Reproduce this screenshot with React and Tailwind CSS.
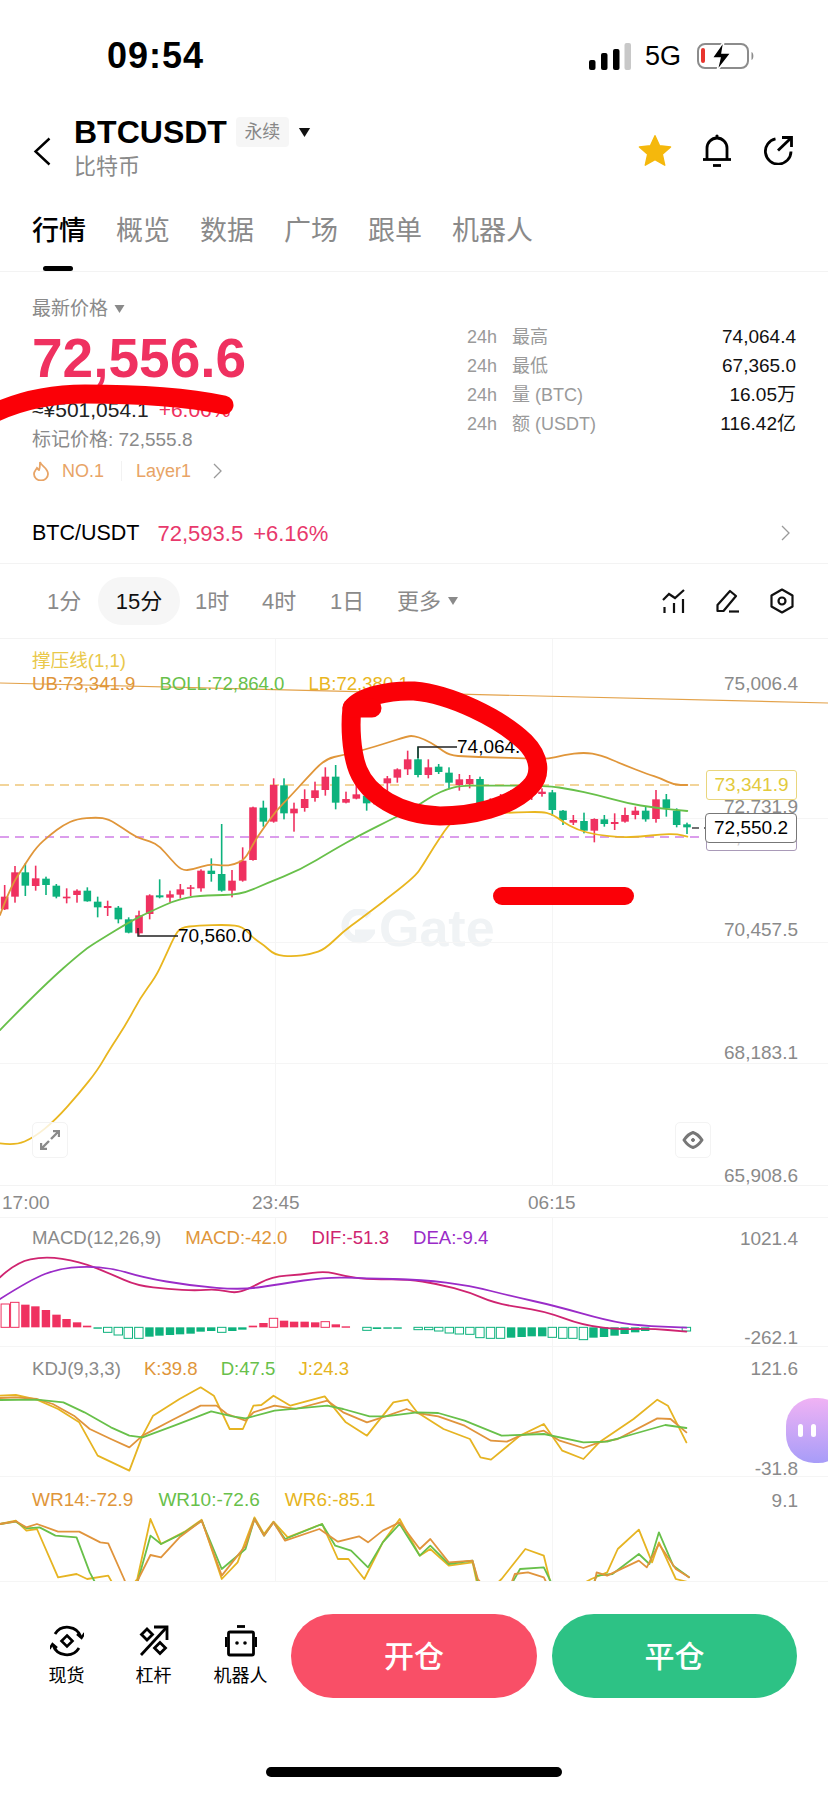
import React from 'react';

// candles: [x, high, low, bodyTop, bodyBottom, up] measured on a 3x crop of the chart (origin y=640)
const candles = [
  [14,735,810,770,808,1],[45,678,788,697,770,1],[76,670,768,697,737,0],[107,677,752,715,738,1],
  [138,710,765,716,735,0],[169,732,775,737,770,0],[200,745,790,770,775,1],[231,748,788,752,765,1],
  [262,742,785,752,784,0],[293,770,832,785,802,0],[323,782,828,798,804,1],[355,798,850,803,838,0],
  [386,832,880,838,878,0],[417,812,885,826,880,1],[449,763,838,766,822,1],[479,718,775,766,772,0],
  [510,752,787,763,773,1],[541,732,775,748,764,1],[572,735,768,742,746,1],[603,688,755,692,745,1],
  [634,655,725,692,702,0],[665,552,755,702,752,0],[696,690,772,722,752,1],[728,622,725,662,722,1],
  [759,500,662,502,660,1],[790,482,560,503,545,0],[821,415,548,435,545,1],[852,415,538,436,520,0],
  [882,488,575,506,520,1],[914,448,515,477,504,1],[945,425,485,451,474,1],[976,382,467,410,450,1],
  [1007,375,508,410,488,0],[1038,455,490,477,488,1],[1069,435,478,463,476,1],[1100,465,512,467,490,0],
  [1131,450,495,475,493,1],[1162,408,455,415,430,1],[1192,385,428,388,413,1],[1223,332,405,358,388,1],
  [1254,320,412,358,405,0],[1285,358,415,382,405,1],[1316,372,402,380,396,0],[1347,382,445,398,428,0],
  [1378,402,452,418,435,1],[1409,405,445,417,432,1],[1440,410,498,417,492,0],[1471,475,510,490,505,1],
  [1502,462,505,475,490,1],[1533,450,490,462,478,1],[1564,448,485,450,468,1],[1595,445,480,455,465,1],
  [1626,445,470,455,462,1],[1657,450,528,457,510,0],[1689,510,555,512,540,0],[1720,525,555,540,548,1],
  [1752,518,580,543,572,0],[1783,535,607,537,572,1],[1813,525,560,538,552,0],[1844,520,570,546,552,1],
  [1875,503,548,525,545,1],[1906,500,538,512,525,1],[1937,500,545,512,538,0],[1968,450,548,478,537,1],
  [1999,462,530,478,505,0],[2030,505,562,512,555,0],[2061,548,582,553,562,0],
];

const chartPts = (a) => a.map(([x, y]) => `${x / 3},${640 + y / 3}`).join(' ');
const axisPts = (a) => a.map(([x, y]) => `${x / 1.894},${900 + y / 3}`).join(' ');
const subPts = (a) => a.map(([x, y]) => `${x / 1.894},${1210 + y / 3}`).join(' ');

// rounds off a polyline through the midpoints of its segments
const smoothPath = (s) => {
  const p = s.split(' ').map((t) => t.split(',').map(Number));
  let d = `M${p[0][0]} ${p[0][1]}`;
  for (let i = 1; i < p.length - 1; i++) {
    const mx = (p[i][0] + p[i + 1][0]) / 2;
    const my = (p[i][1] + p[i + 1][1]) / 2;
    d += `Q${p[i][0]} ${p[i][1]} ${mx} ${my}`;
  }
  const last = p[p.length - 1];
  return `${d}L${last[0]} ${last[1]}`;
};

const upper = chartPts([[0,825],[30,745],[70,680],[110,620],[150,585],[190,555],[230,537],[290,532],[325,537],[370,565],[410,593],[450,603],[480,620],[510,655],[545,692],[580,688],[630,672],[670,677],[700,675],[735,658],[760,610],[790,565],[830,510],[870,470],[920,415],[975,357],[1030,345],[1090,330],[1150,312],[1225,288],[1242,288],[1272,297],[1312,320],[1347,346],[1402,350],[1472,352],[1582,355],[1642,358],[1692,345],[1752,337],[1802,345],[1872,375],[1942,402],[1982,415],[2022,435],[2062,435]]);
const middle = chartPts([[0,1170],[126,1041],[252,930],[300,900],[390,845],[450,815],[540,775],[620,765],[720,765],[800,730],[900,690],[1000,630],[1080,585],[1190,530],[1242,505],[1262,490],[1302,465],[1342,447],[1382,437],[1442,437],[1642,437],[1712,448],[1792,465],[1882,490],[1962,503],[2062,513]]);
const lowerA = axisPts([[0,730],[28,737],[65,712],[105,660],[150,580],[185,510],[205,455],[240,370],[265,295],[295,230],[310,180],[330,110],[342,82],[375,77],[430,74],[460,80],[480,115],[500,135],[520,165],[555,170],[590,162],[615,148],[650,95],[680,60],[730,0]]);
const lowerB = chartPts([[1155,780],[1242,715],[1272,670],[1302,620],[1342,560],[1372,530],[1442,520],[1542,518],[1622,515],[1657,522],[1687,545],[1732,570],[1792,585],[1862,592],[1922,590],[1982,583],[2032,582],[2062,590]]);

const dif = subPts([[0,205],[30,160],[85,142],[150,157],[210,195],[260,230],[320,240],[370,245],[410,240],[445,253],[470,240],[515,203],[570,197],[615,186],[650,200],[695,212],[770,210],[830,225],[890,250],[940,285],[1030,305],[1105,350],[1180,362],[1230,358],[1300,368]]);
const dea = subPts([[0,270],[60,210],[110,180],[160,172],[215,178],[270,205],[360,230],[460,243],[530,225],[620,204],[690,208],[800,212],[890,230],[970,262],[1050,290],[1150,335],[1210,350],[1300,356]]);

// [x, end y, hollow] on the x-squashed crop, baseline y=355
const histogram = [
  [10,285,1],[28,280,1],[48,287,0],[67,292,0],[87,303,0],[107,317,0],[126,330,0],[146,340,0],[165,350,0],[185,357,0],
  [204,370,1],[224,378,1],[243,388,1],[263,388,1],[283,383,0],[302,380,0],[322,378,0],[341,376,0],[361,374,0],[380,368,0],[400,366,0],[420,370,1],[440,366,0],[459,362,0],
  [479,350,0],[499,342,0],[518,328,1],[538,335,0],[557,338,0],[577,338,0],[597,340,0],[616,338,1],[636,346,0],[655,352,0],
  [695,364,1],[714,360,0],[734,358,0],[753,358,0],[792,362,1],[812,362,1],[831,366,1],[851,372,1],[870,375,1],[890,376,1],[909,386,1],[929,388,1],[948,388,1],
  [968,386,0],[988,384,0],[1007,382,0],[1027,382,0],[1046,385,1],[1066,388,1],[1085,388,1],[1105,392,1],[1124,386,0],[1144,384,0],[1164,380,0],[1183,375,0],[1203,370,0],[1222,366,0],[1300,366,1],
];

const kLine = subPts([[0,567],[30,565],[70,570],[100,585],[140,620],[170,660],[210,690],[245,715],[270,680],[330,630],[380,590],[410,590],[430,615],[465,635],[480,610],[520,590],[560,600],[620,575],[650,610],[695,640],[730,622],[770,600],[790,612],[830,622],[880,650],[930,695],[960,698],[985,680],[1030,665],[1060,695],[1105,717],[1135,700],[1170,690],[1245,628],[1270,630],[1300,670]]);
const dLine = subPts([[0,573],[70,572],[120,580],[160,610],[210,655],[245,680],[270,685],[330,650],[400,607],[440,622],[465,628],[520,605],[620,590],[650,600],[700,622],[730,622],[790,610],[830,612],[880,635],[950,680],[1030,675],[1105,700],[1150,698],[1200,675],[1260,648],[1300,657]]);
const jLine = subPts([[0,560],[30,558],[70,572],[110,600],[150,640],[185,740],[245,785],[270,680],[290,620],[340,570],[380,535],[405,560],[435,660],[460,660],[480,590],[495,588],[518,560],[550,590],[615,562],[655,640],[695,680],[745,580],[772,572],[790,610],[840,660],[890,690],[910,745],[930,752],[985,680],[1030,645],[1065,725],[1105,750],[1135,700],[1200,630],[1245,572],[1265,590],[1300,700]]);

const wr14 = subPts([[0,945],[30,937],[50,955],[70,945],[110,968],[150,968],[190,1000],[205,1003],[235,1110],[250,1170],[262,1110],[285,1038],[305,1045],[340,985],[382,935],[420,1100],[465,1010],[482,930],[500,980],[518,940],[540,995],[605,960],[640,998],[680,982],[697,1000],[725,965],[757,940],[795,1020],[815,990],[850,1060],[895,1055],[905,1110],[950,1200],[975,1095],[1000,1090],[1030,1105],[1050,1170],[1120,1170],[1130,1090],[1150,1100],[1210,1055],[1225,1075],[1248,1005],[1280,1080],[1305,1105]]);
const wr10 = subPts([[0,945],[30,938],[50,958],[75,955],[105,980],[145,985],[170,1090],[190,1150],[255,1150],[285,980],[305,1005],[350,970],[382,935],[420,1080],[465,1020],[482,930],[500,980],[518,940],[540,990],[610,945],[635,1010],[665,1025],[697,1075],[725,1000],[757,945],[795,1040],[815,1010],[850,1065],[895,1055],[910,1150],[960,1150],[985,1080],[1030,1075],[1050,1140],[1120,1140],[1130,1100],[1160,1095],[1210,1035],[1230,1065],[1248,970],[1275,1070],[1305,1105]]);
const wr6 = subPts([[0,945],[30,935],[50,965],[70,960],[110,1105],[145,1095],[165,1110],[205,1100],[230,1170],[260,1110],[285,930],[305,1005],[350,968],[382,932],[420,1110],[450,1060],[482,925],[500,975],[518,938],[545,985],[610,945],[640,1050],[660,1050],[690,1110],[725,1000],[757,930],[795,1040],[815,1020],[850,1070],[895,1060],[910,1170],[950,1110],[995,1020],[1030,1040],[1050,1170],[1120,1110],[1150,1090],[1170,1020],[1210,962],[1235,1060],[1248,1000],[1280,1110],[1305,1120]]);

const RED = '#ef3160';
const GREEN = '#0db27d';

const Line = ({ points, color, width = 1.8 }) => (
  <polyline points={points} fill="none" stroke={color} strokeWidth={width} strokeLinejoin="round" strokeLinecap="round" />
);

const Curve = ({ points, color, width = 1.8 }) => (
  <path d={smoothPath(points)} fill="none" stroke={color} strokeWidth={width} strokeLinecap="round" />
);

const VGrid = ({ y1, y2 }) => (
  <g stroke="#f5f5f5" strokeWidth="1">
    <line x1="275.5" x2="275.5" y1={y1} y2={y2} />
    <line x1="552.5" x2="552.5" y1={y1} y2={y2} />
  </g>
);

const MainChart = () => (
  <svg className="absolute inset-0 w-[828px] h-[547px]" viewBox="0 639 828 547">
    <VGrid y1={639} y2={1186} />
    <g stroke="#f5f5f5" strokeWidth="1">
      <line x1="0" x2="828" y1="818.5" y2="818.5" />
      <line x1="0" x2="828" y1="942.5" y2="942.5" />
      <line x1="0" x2="828" y1="1063.5" y2="1063.5" />
    </g>
    <line x1="0" y1="683" x2="828" y2="703" stroke="#e3a24a" strokeWidth="1.2" />
    <line x1="0" y1="785" x2="700" y2="785" stroke="#eec67a" strokeWidth="1.4" strokeDasharray="9 6" />
    <line x1="0" y1="837" x2="700" y2="837" stroke="#cf7de6" strokeWidth="1.4" strokeDasharray="9 6" />
    {candles.map(([x, hi, lo, top, bot, up]) => (
      <g key={x} fill={up ? RED : GREEN}>
        <rect x={x / 3 - 0.8} y={640 + hi / 3} width="1.6" height={(lo - hi) / 3} />
        <rect x={x / 3 - 3.8} y={640 + top / 3} width="7.6" height={Math.max((bot - top) / 3, 1.5)} />
      </g>
    ))}
    <Curve points={upper} color="#e0963a" />
    <Curve points={middle} color="#68c04a" />
    <Curve points={lowerA} color="#e9b61f" />
    <Curve points={lowerB} color="#e9b61f" />
    <polyline points="138,928 138,936 178,936" fill="none" stroke="#222" strokeWidth="1.4" />
    <polyline points="418,758 418,747 457,747" fill="none" stroke="#222" strokeWidth="1.4" />
    <line x1="692" y1="828" x2="706" y2="828" stroke="#444" strokeWidth="1.4" strokeDasharray="7 5" />
  </svg>
);

const MacdChart = () => (
  <svg className="absolute inset-0 w-[828px] h-[129px]" viewBox="0 1219 828 129">
    <VGrid y1={1219} y2={1348} />
    {histogram.map(([x, y, hollow]) => {
      const top = 1210 + Math.min(y, 355) / 3;
      const h = Math.max(Math.abs(y - 355) / 3, 1.4);
      const color = y < 355 ? RED : GREEN;
      return (
        <rect key={x} x={x / 1.894 - 4.2} y={top} width="8.4" height={h}
          fill={hollow ? '#fff' : color} stroke={hollow ? color : 'none'} strokeWidth="1" />
      );
    })}
    <Curve points={dif} color="#cf2470" />
    <Curve points={dea} color="#9a2cc8" />
  </svg>
);

const KdjChart = () => (
  <svg className="absolute inset-0 w-[828px] h-[130px]" viewBox="0 1348 828 130">
    <VGrid y1={1348} y2={1478} />
    <Line points={jLine} color="#e6b422" />
    <Line points={kLine} color="#e0943c" />
    <Line points={dLine} color="#68c04a" />
  </svg>
);

const WrChart = () => (
  <svg className="absolute inset-0 w-[828px] h-[105px]" viewBox="0 1478 828 105">
    <VGrid y1={1478} y2={1583} />
    <Line points={wr6} color="#e6b422" />
    <Line points={wr10} color="#68c04a" />
    <Line points={wr14} color="#e0943c" />
  </svg>
);

const Caret = ({ className }) => (
  <svg className={className} viewBox="0 0 10 8"><path d="M0 0H10L5 8Z" fill="currentColor" /></svg>
);

const Chevron = ({ className }) => (
  <svg className={className} viewBox="0 0 9 16" fill="none" stroke="currentColor" strokeWidth="1.3"><path d="M1 1l7 7-7 7" /></svg>
);

const NavItem = ({ label, children }) => (
  <div className="flex w-[87px] flex-col items-center">
    {children}
    <span className="mt-[7px] whitespace-nowrap text-[18px] leading-[24px]">{label}</span>
  </div>
);

const stats = [
  ['最高', '74,064.4'],
  ['最低', '67,365.0'],
  ['量 (BTC)', '16.05万'],
  ['额 (USDT)', '116.42亿'],
];

export default function App() {
  return (
    <div className="relative w-[828px] h-[1795px] overflow-hidden bg-white text-black font-['Liberation_Sans','Noto_Sans_CJK_SC',sans-serif]">
      {/* status bar */}
      <div className="flex h-[108px] items-start pl-[107px] pr-[73px] pt-[42px]">
        <span className="text-[36px] leading-[28px] font-bold tracking-[1px]">09:54</span>
        <div className="ml-auto flex items-center h-[28px]">
          <svg className="w-[42px] h-[27px]" viewBox="0 0 42 27">
            <rect x="0" y="17" width="6.5" height="10" rx="2" fill="#000" />
            <rect x="12" y="10" width="6.5" height="17" rx="2" fill="#000" />
            <rect x="24" y="6" width="6.5" height="21" rx="2" fill="#000" />
            <rect x="35.5" y="0" width="6.5" height="27" rx="2" fill="#c8c8c8" />
          </svg>
          <span className="ml-[14px] text-[27px] leading-[28px]">5G</span>
          <svg className="ml-[16px] w-[58px] h-[30px]" viewBox="0 0 58 30">
            <rect x="1" y="3" width="50" height="24" rx="7" fill="none" stroke="#8c8c8c" strokeWidth="2" />
            <rect x="4" y="7" width="4" height="15" rx="2" fill="#e8352e" />
            <path d="M54.5 11c2.5 1 2.5 7 0 8z" fill="#8c8c8c" />
            <path d="M27 0L15 17h8l-3 13L34 12h-9z" fill="#000" stroke="#fff" strokeWidth="1.5" />
          </svg>
        </div>
      </div>

      {/* header */}
      <div className="flex h-[82px] items-start">
        <svg className="ml-[33px] mt-[29px] w-[18px] h-[29px]" viewBox="0 0 18 29" fill="none" stroke="#000" strokeWidth="2.4">
          <path d="M16.5 1.5L2.5 14.5l14 13" />
        </svg>
        <div className="ml-[23px] pt-[10px]">
          <div className="flex items-center h-[28px]">
            <span className="text-[32px] leading-[28px] font-bold">BTCUSDT</span>
            <span className="ml-[9px] flex items-center justify-center w-[53px] h-[30px] rounded-[4px] bg-[#f6f6f6] text-[18px] text-[#888888]">永续</span>
            <Caret className="ml-[9px] w-[13px] h-[9px] text-[#111111]" />
          </div>
          <div className="mt-[7px] text-[22px] leading-[28px] text-[#8a8a8a]">比特币</div>
        </div>
        <div className="ml-auto mr-[35px] mt-[26px] flex items-center">
          <svg className="w-[34px] h-[32px]" viewBox="0 0 24 23">
            <path d="M12 .5l3.3 7.2 7.9.9-5.9 5.3 1.7 7.8L12 17.7l-7 4 1.7-7.8L.8 8.6l7.9-.9z" fill="#f5b80c" stroke="#f5b80c" strokeWidth="1" strokeLinejoin="round" />
          </svg>
          <svg className="ml-[31px] w-[28px] h-[33px]" viewBox="0 0 28 33" fill="none" stroke="#000" strokeWidth="2.8">
            <path d="M4 25V14a10 10 0 0 1 20 0v11" />
            <path d="M0 25.5h28" />
            <path d="M10 31.5h8" />
            <circle cx="14" cy="2" r="1.6" fill="#000" stroke="none" />
          </svg>
          <svg className="ml-[33px] w-[29px] h-[29px]" viewBox="0 0 29 29" fill="none" stroke="#000" strokeWidth="2.8">
            <path d="M11.5 2.8A12.8 12.8 0 1 0 27 15.5" />
            <path d="M14 14.5L26.5 2.5" />
            <path d="M18 1.5h9.5V11" />
          </svg>
        </div>
      </div>

      {/* tabs */}
      <div className="border-b border-[#f3f3f3]">
        <div className="flex h-[76px] items-center gap-[30px] pl-[32px] pt-[6px] text-[27px] text-[#8a8a8a]">
          <span className="text-black font-medium">行情</span>
          <span>概览</span>
          <span>数据</span>
          <span>广场</span>
          <span>跟单</span>
          <span>机器人</span>
        </div>
        <div className="ml-[43px] w-[30px] h-[5px] rounded-full bg-black" />
      </div>

      {/* price block */}
      <div className="border-b border-[#f3f3f3] px-[32px] pt-[25px] pb-[18px]">
        <div className="flex">
          <div className="w-[435px]">
            <div className="flex items-center h-[24px] text-[19px] text-[#8a8a8a]">
              最新价格
              <Caret className="ml-[6px] w-[11px] h-[8px] text-[#8a8a8a]" />
            </div>
            <div className="mt-[10px] text-[55px] leading-[54px] font-bold text-[#ef3160]">72,556.6</div>
            <div className="mt-[13px] flex h-[24px] items-center text-[21px]">
              <span className="text-[#222222]">≈¥501,054.1</span>
              <span className="ml-[10px] text-[#ef3160]">+6.06%</span>
            </div>
            <div className="mt-[6px] h-[24px] text-[19px] leading-[24px] text-[#8a8a8a]">标记价格: 72,555.8</div>
            <div className="mt-[7px] flex h-[24px] items-center text-[18px] text-[#e8a466]">
              <svg className="w-[18px] h-[20px]" viewBox="0 0 18 20" fill="none" stroke="#e8a466" strokeWidth="1.8">
                <path d="M8 1c1 4 8 6 8 12a7 6.500 0 0 1-14 0c0-3 2-4 3-6 1 1 1.500 2 2 2 1-2 1-5 1-8z" />
              </svg>
              <span className="ml-[12px]">NO.1</span>
              <span className="ml-[17px] w-px h-[20px] bg-[#f2f2f2]" />
              <span className="ml-[14px]">Layer1</span>
              <Chevron className="ml-[22px] w-[9px] h-[16px] text-[#9a9a9a]" />
            </div>
          </div>
          <div className="flex-1 pt-[26px]">
            {stats.map(([label, value]) => (
              <div key={label} className="flex h-[29px] items-center text-[18px]">
                <span className="w-[45px] text-[#9a9a9a]">24h</span>
                <span className="text-[#9a9a9a]">{label}</span>
                <span className="ml-auto text-[19px] text-[#111111]">{value}</span>
              </div>
            ))}
          </div>
        </div>
        <div className="mt-[38px] flex h-[24px] items-center text-[22px]">
          <span className="text-[21.5px]">BTC/USDT</span>
          <span className="ml-[18px] text-[#e8396c]">72,593.5</span>
          <span className="ml-[10px] text-[#e8396c]">+6.16%</span>
          <Chevron className="ml-auto mr-[6px] w-[9px] h-[16px] text-[#9a9a9a]" />
        </div>
      </div>

      {/* intervals */}
      <div className="flex h-[75px] items-center whitespace-nowrap pl-[47px] pr-[34px] text-[22px] text-[#8a8a8a] border-b border-[#f3f3f3]">
        <span className="w-[34px]">1分</span>
        <span className="ml-[17px] flex w-[82px] h-[48px] items-center justify-center rounded-full bg-[#f6f6f6] text-[#111111]">15分</span>
        <span className="ml-[15px] w-[35px]">1时</span>
        <span className="ml-[32px] w-[35px]">4时</span>
        <span className="ml-[33px] w-[33px]">1日</span>
        <span className="ml-[34px]">更多</span>
        <Caret className="ml-[7px] w-[10px] h-[8px] text-[#8a8a8a]" />
        <div className="ml-auto flex items-center">
          <svg className="w-[24px] h-[24px]" viewBox="0 0 24 24" fill="none" stroke="#111" strokeWidth="2.2">
            <path d="M1 11l6-6 6 4 9-8" />
            <path d="M2.500 18v6M12 14v10M21 10v14" />
          </svg>
          <svg className="ml-[30px] w-[24px] h-[24px]" viewBox="0 0 24 24" fill="none" stroke="#111" strokeWidth="2.2" strokeLinejoin="round">
            <path d="M1.500 16L14 2l6 5L7.500 22H1.500z" />
            <path d="M13 22.500h10" />
          </svg>
          <svg className="ml-[30px] w-[24px] h-[26px]" viewBox="0 0 24 26" fill="none" stroke="#111" strokeWidth="2.2" strokeLinejoin="round">
            <path d="M12 1.500l10.500 6v11l-10.500 6-10.500-6v-11z" />
            <circle cx="12" cy="13" r="3.500" />
          </svg>
        </div>
      </div>

      {/* main chart */}
      <div className="relative h-[547px] border-b border-[#f3f3f3]">
        <div className="absolute left-[335px] top-[270px] flex items-center gap-[4px] text-[#f0f3f5]">
          <svg className="w-[40px] h-[38px]" viewBox="0 0 40 34" fill="none" stroke="currentColor" strokeWidth="7">
            <path d="M34 5A14 14 0 1 0 36 22H20" />
          </svg>
          <span className="text-[52px] leading-[38px] font-bold">Gate</span>
        </div>
        <MainChart />
        <div className="absolute left-[32px] top-[10px] text-[18.6px] leading-[24px] text-[#e9c84a]">撑压线(1,1)</div>
        <div className="absolute left-[32px] top-[33px] flex gap-[24px] text-[18.6px] leading-[24px]">
          <span className="text-[#e0963a]">UB:73,341.9</span>
          <span className="text-[#68c04a]">BOLL:72,864.0</span>
          <span className="text-[#e9b61f]">LB:72,380.1</span>
        </div>
        <div className="absolute right-[30px] top-[33px] flex h-[516px] flex-col justify-between text-right text-[19px] leading-[24px] text-[#8a8a8a]">
          <span>75,006.4</span>
          <span>72,731.9</span>
          <span>70,457.5</span>
          <span>68,183.1</span>
          <span>65,908.6</span>
        </div>
        <div className="absolute left-[178px] top-[285px] text-[19px] leading-[24px]">70,560.0</div>
        <div className="absolute left-[457px] top-[96px] text-[19px] leading-[24px]">74,064.4</div>
        {/* price tags */}
        <div className="absolute left-[706px] top-[185px] flex w-[91px] h-[27px] items-center justify-center rounded-[3px] border border-[#a99ab8] bg-white text-[19px] text-[#c8c8c8]">72,380.1</div>
        <div className="absolute left-[706px] top-[131px] flex w-[91px] h-[30px] items-center justify-center rounded-[3px] border border-[#e9d67e] bg-white text-[19px] text-[#e3ca3c]">73,341.9</div>
        <div className="absolute left-[705px] top-[174px] flex w-[92px] h-[30px] items-center justify-center rounded-[4px] border border-[#777777] bg-white text-[19px]">72,550.2</div>
        {/* chart buttons */}
        <div className="absolute left-[32px] top-[483px] flex w-[36px] h-[36px] items-center justify-center rounded-[5px] border border-[#f3f3f3] bg-white/80">
          <svg className="w-[20px] h-[20px]" viewBox="0 0 20 20" fill="none" stroke="#8a8a8a" strokeWidth="2.4">
            <path d="M11 9l8-8M13 1h6v6M9 11l-8 8M1 13v6h6" />
          </svg>
        </div>
        <div className="absolute left-[675px] top-[483px] flex w-[36px] h-[36px] items-center justify-center rounded-[5px] border border-[#f3f3f3] bg-white">
          <svg className="w-[22px] h-[22px]" viewBox="0 0 22 22" fill="none" stroke="#777" strokeWidth="3">
            <path d="M11 3.500Q16 5 20 11Q16 17 11 18.500Q6 17 2 11Q6 5 11 3.500z" strokeLinejoin="round" />
            <circle cx="11" cy="11" r="1.500" fill="#777" strokeWidth="1" />
          </svg>
        </div>
      </div>

      {/* time axis */}
      <div className="flex h-[32px] items-center pl-[2px] pt-[4px] text-[19px] text-[#8a8a8a] border-b border-[#f5f5f5]">
        <span className="w-[250px]">17:00</span>
        <span className="w-[276px]">23:45</span>
        <span>06:15</span>
      </div>

      {/* MACD */}
      <div className="relative h-[129px] border-b border-[#f5f5f5]">
        <MacdChart />
        <div className="absolute left-[32px] top-[8px] flex gap-[24px] text-[18.6px] leading-[24px]">
          <span className="text-[#8a8a8a]">MACD(12,26,9)</span>
          <span className="text-[#e0963a]">MACD:-42.0</span>
          <span className="text-[#cf2470]">DIF:-51.3</span>
          <span className="text-[#9a2cc8]">DEA:-9.4</span>
        </div>
        <div className="absolute right-[30px] top-[9px] flex h-[123px] flex-col justify-between text-right text-[19px] leading-[24px] text-[#8a8a8a]">
          <span>1021.4</span>
          <span>-262.1</span>
        </div>
      </div>

      {/* KDJ */}
      <div className="relative h-[130px] border-b border-[#f5f5f5]">
        <KdjChart />
        <div className="absolute left-[32px] top-[10px] flex gap-[23px] text-[18.6px] leading-[24px]">
          <span className="text-[#8a8a8a]">KDJ(9,3,3)</span>
          <span className="text-[#e0963a]">K:39.8</span>
          <span className="text-[#68c04a]">D:47.5</span>
          <span className="text-[#e6b422]">J:24.3</span>
        </div>
        <div className="absolute right-[30px] top-[10px] flex h-[124px] flex-col justify-between text-right text-[19px] leading-[24px] text-[#8a8a8a]">
          <span>121.6</span>
          <span>-31.8</span>
        </div>
      </div>

      {/* WR */}
      <div className="relative h-[105px] overflow-hidden border-b border-[#f5f5f5]">
        <WrChart />
        <div className="absolute left-[32px] top-[11px] flex gap-[25px] text-[19px] leading-[24px]">
          <span className="text-[#e0963a]">WR14:-72.9</span>
          <span className="text-[#68c04a]">WR10:-72.6</span>
          <span className="text-[#e6b422]">WR6:-85.1</span>
        </div>
        <div className="absolute right-[30px] top-[12px] text-[19px] leading-[24px] text-[#8a8a8a]">9.1</div>
      </div>

      {/* bottom actions */}
      <div className="mt-[32px] flex h-[84px] items-center pl-[23px]">
        <NavItem label="现货">
          <svg className="w-[34px] h-[32px]" viewBox="0 0 34 32" fill="none" stroke="#000" strokeWidth="2.8">
            <path d="M5 9A14.500 14.500 0 0 1 31 12" />
            <path d="M29 23A14.500 14.500 0 0 1 3 20" />
            <path d="M27 9l4.500 4 3-5M7 23l-4.500-4-3 5" strokeWidth="2.4" />
            <path d="M17 10.500l5.500 5.500-5.500 5.500-5.500-5.500z" strokeWidth="2.6" />
          </svg>
        </NavItem>
        <NavItem label="杠杆">
          <svg className="w-[30px] h-[32px]" viewBox="0 0 30 32" fill="none" stroke="#000" strokeWidth="2.8">
            <path d="M2 30L27 3" />
            <path d="M15 2h13v13" />
            <path d="M8 4l5.500 5.500L8 15 2.500 9.500z" />
            <path d="M21 17.500l5.500 5.500-5.500 5.500-5.500-5.500z" />
          </svg>
        </NavItem>
        <NavItem label="机器人">
          <svg className="w-[32px] h-[32px]" viewBox="0 0 32 32" fill="none" stroke="#000" strokeWidth="2.800">
            <rect x="3.500" y="7" width="25" height="23" rx="1.500" />
            <path d="M12 1.500h8" />
            <path d="M1 12v10M31 12v10" strokeWidth="2.400" />
            <circle cx="12" cy="18" r="1.800" fill="#000" stroke="none" />
            <circle cx="20" cy="18" r="1.800" fill="#000" stroke="none" />
          </svg>
        </NavItem>
        <div className="ml-[7px] flex w-[246px] h-[84px] items-center justify-center rounded-full bg-[#f94f67] text-[30px] font-medium text-white">开仓</div>
        <div className="ml-[15px] flex w-[245px] h-[84px] items-center justify-center rounded-full bg-[#2dc285] text-[30px] font-medium text-white">平仓</div>
      </div>

      {/* home indicator */}
      <div className="mx-auto mt-[69px] w-[296px] h-[10px] rounded-full bg-black" />

      {/* floating assistant */}
      <div className="absolute left-[786px] top-[1398px] flex w-[60px] h-[65px] items-center gap-[8px] rounded-[28px] bg-gradient-to-b from-[#f0b2f4] to-[#a79cf8] pl-[12px]">
        <span className="w-[5px] h-[13px] rounded-full bg-white" />
        <span className="w-[5px] h-[13px] rounded-full bg-white" />
      </div>

      {/* red hand-drawn marks */}
      <svg className="pointer-events-none absolute inset-0 w-[828px] h-[1795px]" viewBox="0 0 828 1795" fill="none" stroke="#fb0007" strokeLinecap="round" strokeLinejoin="round">
        <path d="M-8 414C25 398 60 394 85 394C140 394 190 398 224 405" strokeWidth="19" />
        <path d="M352 708C360 697 388 690 414 691C450 694 500 718 525 742C540 757 542 775 530 787C510 808 470 816 440 816C400 815 368 795 358 770C351 752 350 725 352 708" strokeWidth="19" />
        <path d="M352 708H372" strokeWidth="19" />
        <path d="M502 896H625" strokeWidth="18" />
      </svg>
    </div>
  );
}
